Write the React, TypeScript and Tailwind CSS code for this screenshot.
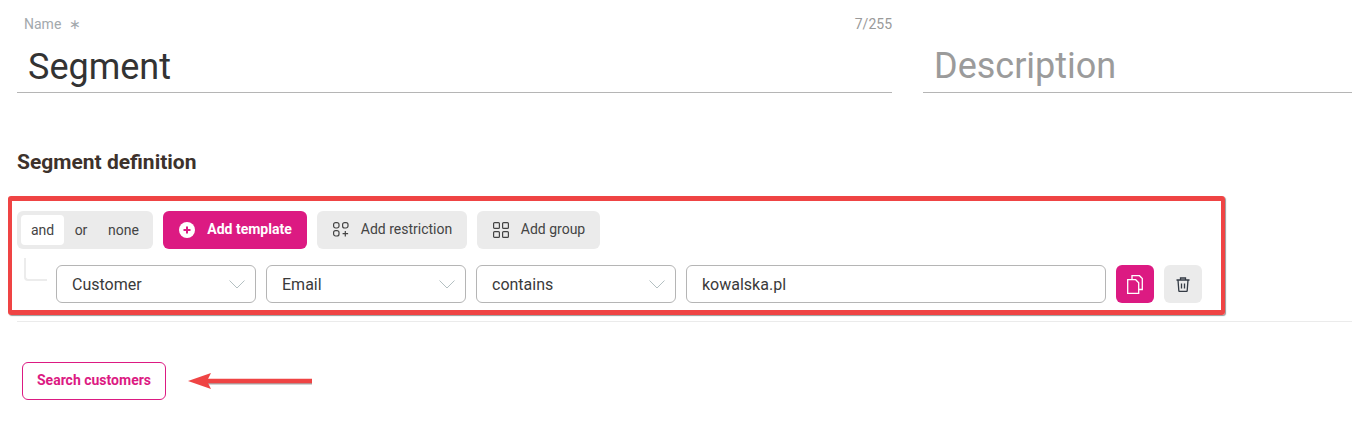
function Chevron() {
  return (
    <svg width="16" height="9" viewBox="0 0 16 9" fill="none" stroke="#b4c0c2" strokeWidth="1">
      <path d="M0.5 0.5L8 8L15.500 0.5" />
    </svg>
  )
}

function SelectBox({ label }: { label: string }) {
  return (
    <div className="flex h-[38px] w-[200px] items-center justify-between rounded-[6px] border border-[#b5b5b5] pl-[15px] pr-[10px] text-[16px] text-[#3a3a3a]">
      <span className="pt-[1px]">{label}</span>
      <Chevron />
    </div>
  )
}

function RestrictionIcon() {
  return (
    <svg width="16" height="15" viewBox="0 0 16 15" fill="none" stroke="#444444" strokeWidth="1.2">
      <rect x="0.6" y="0.6" width="5.4" height="5.4" rx="2" />
      <rect x="9.6" y="0.6" width="5.4" height="5.4" rx="2" />
      <rect x="0.6" y="8.6" width="5.4" height="5.4" rx="2" />
      <path d="M12.3 9v5.500M9.600 11.700h5.500" />
    </svg>
  )
}

function GroupIcon() {
  return (
    <svg width="16" height="16" viewBox="0 0 16 16" fill="none" stroke="#444444" strokeWidth="1.2">
      <rect x="0.6" y="0.6" width="5.8" height="5.8" rx="1" />
      <rect x="9.6" y="0.6" width="5.8" height="5.8" rx="1" />
      <rect x="0.6" y="9.6" width="5.8" height="5.8" rx="1" />
      <rect x="9.6" y="9.6" width="5.8" height="5.8" rx="1" />
    </svg>
  )
}

function CopyIcon() {
  return (
    <svg width="16" height="19" viewBox="0 0 16 19" fill="none" stroke="#ffffff" strokeWidth="1.3">
      <path d="M0.7 4.700h8l3 3v10.600H0.700z" />
      <path d="M5 4.500V0.700h7.500l2.800 2.800V14.500h-3.600" />
    </svg>
  )
}

function TrashIcon() {
  return (
    <svg width="14" height="15" viewBox="0 0 14 15" fill="none" stroke="#343b45" strokeWidth="1.3">
      <path d="M0.500 3h13M4.500 3V1h5v2" />
      <path d="M2 3l0.800 10.500a1 1 0 0 0 1 1h6.400a1 1 0 0 0 1-1L12 3" />
      <path d="M5.500 6.500v5M8.500 6.500v5" />
    </svg>
  )
}

export default function App() {
  return (
    <div className="h-[437px] w-[1352px] overflow-hidden bg-white font-['Roboto',sans-serif]">
      <div className="flex gap-[31px] pl-[17px] pt-[16px]">
        <div className="w-[875px] border-b border-[#b5b5b5]">
          <div className="flex h-[17px] items-center justify-between text-[14px] text-[#a3a9ad]">
            <span className="pl-[7px]">
              Name <span className="ml-[4px]">∗</span>
            </span>
            <span className="text-[#9a9a9a]">7/255</span>
          </div>
          <div className="h-[59px] pl-[11px] pt-[10px] text-[36px] leading-[48px] text-[#333333]">Segment</div>
        </div>
        <div className="flex h-[77px] w-[429px] items-end border-b border-[#b5b5b5] pb-[2px] pl-[11px] text-[36px] leading-[48px] text-[#9b9b9b]">
          Description
        </div>
      </div>

      <h2 className="pl-[17px] pt-[56px] text-[21px] font-bold leading-[27px] text-[#3d322c]">Segment definition</h2>

      <div className="ml-[8px] mt-[20px] h-[119px] w-[1217px] rounded-[3px] border-x-4 border-y-[5px] border-[#ef4444] pl-[5px] pt-[10px] shadow-[1px_1px_1px_rgba(0,0,0,0.4)]">
        <div className="flex gap-[10px]">
          <div className="flex h-[38px] w-[136px] items-center rounded-[6px] bg-[#ebebeb] px-[4px] text-[14px] text-[#444444]">
            <span className="flex h-[30px] w-[43px] items-center justify-center rounded-[4px] bg-white">and</span>
            <span className="w-[34px] text-center">or</span>
            <span className="w-[51px] text-center">none</span>
          </div>
          <button className="flex h-[38px] w-[144px] items-center justify-center gap-[12px] rounded-[6px] bg-[#dc1a82] pb-[1px] pl-[1px] text-[14px] font-bold text-white">
            <svg width="16" height="16" viewBox="0 0 16 16" className="mt-[1px]">
              <circle cx="8" cy="8" r="8" fill="#ffffff" />
              <path d="M8 4.500v7M4.500 8h7" stroke="#dc1a82" strokeWidth="2" />
            </svg>
            Add template
          </button>
          <button className="flex h-[38px] w-[150px] items-center justify-center gap-[12px] rounded-[6px] bg-[#ebebeb] pb-[1px] pl-[1px] text-[14px] text-[#444444]">
            <RestrictionIcon />
            Add restriction
          </button>
          <button className="flex h-[38px] w-[123px] items-center justify-center gap-[12px] rounded-[6px] bg-[#ebebeb] pb-[1px] pl-[1px] text-[14px] text-[#444444]">
            <GroupIcon />
            Add group
          </button>
        </div>

        <div className="mt-[16px] flex">
          <div className="-mt-[7px] ml-[7px] mr-[9px] h-[23px] w-[23px] rounded-bl-[4px] border-b-2 border-l-2 border-[#ececec]" />
          <div className="flex gap-[10px]">
            <SelectBox label="Customer" />
            <SelectBox label="Email" />
            <SelectBox label="contains" />
            <div className="flex h-[38px] w-[420px] items-center rounded-[6px] border border-[#b5b5b5] pl-[15px] pt-[1px] text-[16px] text-[#3a3a3a]">
              kowalska.pl
            </div>
            <button className="flex h-[38px] w-[38px] items-center justify-center rounded-[6px] bg-[#dc1a82]">
              <CopyIcon />
            </button>
            <button className="flex h-[38px] w-[38px] items-center justify-center rounded-[6px] bg-[#ebebeb]">
              <TrashIcon />
            </button>
          </div>
        </div>
      </div>

      <div className="ml-[17px] mt-[6px] h-px bg-[#ebebeb]" />

      <div className="ml-[22px] mt-[40px] flex items-center gap-[22px]">
        <button className="h-[38px] w-[144px] rounded-[6px] border border-[#dc1a82] pb-[2px] text-[14px] font-bold text-[#dc1a82]">
          Search customers
        </button>
        <svg width="124" height="18" viewBox="0 0 124 18">
          <path d="M124 10.500H19" stroke="#a8a8a8" strokeWidth="4" />
          <path d="M124 9H19" stroke="#ef4444" strokeWidth="4.500" />
          <path d="M0 9L23 1L19 9L23 17Z" fill="#ef4444" />
        </svg>
      </div>
    </div>
  )
}
